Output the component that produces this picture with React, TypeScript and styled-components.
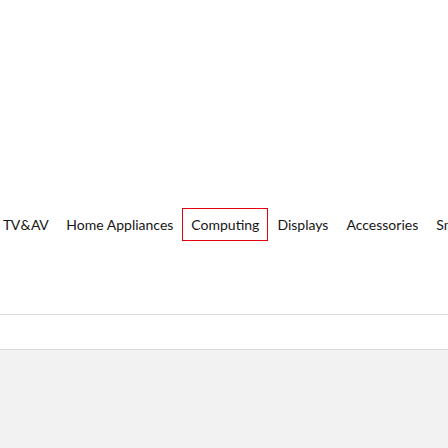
import styled, { createGlobalStyle } from "styled-components";

const GlobalStyle = createGlobalStyle`
  html, body {
    margin: 0;
    padding: 0;
    background: #ffffff;
  }
  body {
    font-family: Lato, "Open Sans", sans-serif;
    overflow: hidden;
  }
`;

const Page = styled.div`
  display: flex;
  flex-direction: column;
  min-height: 100vh;
`;

const Hero = styled.div`
  height: 208px;
`;

const TabStrip = styled.nav`
  display: flex;
  align-items: stretch;
  height: 33px;
  margin-left: -6px;
  white-space: nowrap;
  overflow: hidden;
`;

const Tab = styled.a<{ $active?: boolean; $tight?: boolean }>`
  display: flex;
  align-items: center;
  padding: 0 8px;
  border: 1px solid ${(p) => (p.$active ? "#e3000f" : "transparent")};
  color: #161616;
  font-size: 14px;
  font-weight: 400;
  word-spacing: ${(p) => (p.$tight ? "-2px" : "0")};
  letter-spacing: ${(p) => (p.$tight ? "-0.4px" : "0")};
  text-decoration: none;
  flex-shrink: 0;
`;

const Gap = styled.div`
  height: 73px;
`;

const Band = styled.div`
  height: 34px;
  border-top: 1px solid #dadada;
  border-bottom: 1px solid #dadada;
`;

const Footer = styled.div`
  flex: 1;
  background: #f2f2f2;
`;

const tabs = ["TV & AV", "Home Appliances", "Computing", "Displays", "Accessories", "Smart Things"];

const App = () => {
  return (
    <Page>
      <GlobalStyle />
      <Hero />
      <TabStrip>
        {tabs.map((t) => (
          <Tab key={t} href="#" $active={t === "Computing"} $tight={t === "TV & AV"}>
            {t}
          </Tab>
        ))}
      </TabStrip>
      <Gap />
      <Band />
      <Footer />
    </Page>
  );
};

export default App;
